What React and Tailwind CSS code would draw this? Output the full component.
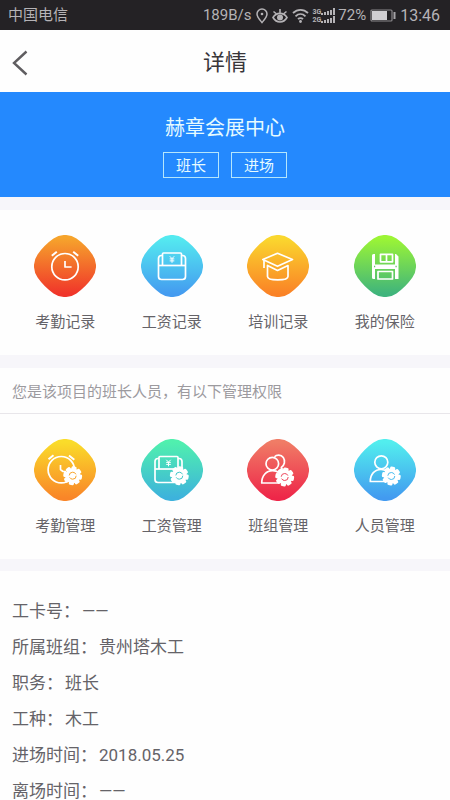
const records = [
  { label: '考勤记录', icon: ClockGlyph, from: '#f6a42c', to: '#f0352a' },
  { label: '工资记录', icon: WalletGlyph, from: '#54eaf0', to: '#449bf0' },
  { label: '培训记录', icon: CapGlyph, from: '#fad72e', to: '#fa8226' },
  { label: '我的保险', icon: FloppyGlyph, from: '#9cf535', to: '#3fb47c' },
]

const management = [
  { label: '考勤管理', icon: ClockGearGlyph, from: '#fadc2a', to: '#f98528' },
  { label: '工资管理', icon: WalletGearGlyph, from: '#50f0ae', to: '#3db2dc' },
  { label: '班组管理', icon: TeamGearGlyph, from: '#f07c66', to: '#ee2649' },
  { label: '人员管理', icon: PersonGearGlyph, from: '#52eeee', to: '#429af0' },
]

const details = [
  { label: '工卡号', value: '——' },
  { label: '所属班组', value: '贵州塔木工' },
  { label: '职务', value: '班长' },
  { label: '工种', value: '木工' },
  { label: '进场时间', value: '2018.05.25' },
  { label: '离场时间', value: '——' },
]

function ClockGlyph() {
  return (
    <g>
      <circle cx="31" cy="31.7" r="13.2" />
      <path d="M17.8 20.8 22.8 16.8M39.2 16.8l5 4" strokeWidth="2" />
      <path d="M31 26v6h6.6" />
    </g>
  )
}

function WalletGlyph() {
  return (
    <g>
      <path d="M21.5 20.5h-1a3 3 0 0 0-3 3v18a3 3 0 0 0 3 3h21a3 3 0 0 0 3-3v-18a3 3 0 0 0-3-3h-1" />
      <path d="M17.5 30.5h27" />
      <path d="M21.5 30.5V19a1 1 0 0 1 1-1h17a1 1 0 0 1 1 1v11.5" />
      <path d="m28.8 21.3 2.2 2.3 2.2-2.3M31 23.6v4.2M28.7 23.9h4.6M28.7 25.9h4.6" strokeWidth="1" />
    </g>
  )
}

function CapGlyph() {
  return (
    <g>
      <path d="M15.8 24.5 30.5 18.3l15 6.2-15 6.8z" />
      <path d="M17 25v8" />
      <path d="M20.5 30.5v11c0 4.500 20.500 4.500 20.500 0v-11l-10.500 5z" />
    </g>
  )
}

function FloppyGlyph() {
  return (
    <g>
      <path d="M18 20.500a1.500 1.500 0 0 1 1.500-1.500H21v10.500h20V19h1l2.500 2.500V44h-3.500V34H21v10h-1.500a1.500 1.500 0 0 1-1.500-1.500z" fill="white" stroke="none" />
      <rect x="26.500" y="19.300" width="12" height="7.500" />
      <path d="M32.500 19.500v7" />
      <rect x="24" y="36.500" width="14.500" height="7.500" />
      <path d="M20 31.500h1.200M41.500 31.500h1.200" stroke="#5fc866" />
    </g>
  )
}

function Gear({ x, y, color }) {
  return (
    <g transform={`translate(${x} ${y})`} stroke="none">
      <circle r="7.500" fill="white" />
      {[0, 45, 90, 135, 180, 225, 270, 315].map((angle) => (
        <rect key={angle} x="-2.600" y="-9.400" width="5.200" height="5" rx="1.500" fill="white" transform={`rotate(${angle + 10})`} />
      ))}
      <circle r="3.500" fill="none" stroke={color} strokeWidth="1" strokeDasharray="9 2" />
    </g>
  )
}

function ClockGearGlyph() {
  return (
    <g>
      <circle cx="27.300" cy="30.700" r="13.200" />
      <path d="m14.500 20.300 5-4M35 16.500l5.300 4.200" strokeWidth="2" />
      <path d="M26.500 26v4.500l2.500 2h3" />
      <Gear x={38.7} y={36.7} color="#f9a42a" />
    </g>
  )
}

function WalletGearGlyph() {
  return (
    <g>
      <path d="M18 19.500h-1a3 3 0 0 0-3 3v18a3 3 0 0 0 3 3h21a3 3 0 0 0 3-3v-18a3 3 0 0 0-3-3h-1" />
      <path d="M14 30h27" />
      <path d="M18 30V18.500a1 1 0 0 1 1-1h17a1 1 0 0 1 1 1V30" />
      <path d="m25.300 20.800 2.200 2.300 2.200-2.300M27.500 23v4.300M25.200 23.400h4.600M25.200 25.400h4.600" strokeWidth="1" />
      <Gear x={38.3} y={36.7} color="#45c8c8" />
    </g>
  )
}

function TeamGearGlyph() {
  return (
    <g>
      <circle cx="25.300" cy="24.700" r="6.300" />
      <path d="M27.500 17.800c2-2.200 6.500-2.600 8.800.7 2.200 3.300 1.500 7.800-2.500 10.500M34 29.500l3 1" />
      <path d="M32 44H14.700c0-7.500 4.800-12.300 10.800-12.300 3 0 4.500.5 6.500 2" />
      <Gear x={37.7} y={38} color="#ee465a" />
    </g>
  )
}

function PersonGearGlyph() {
  return (
    <g>
      <circle cx="27.300" cy="23.300" r="6.500" />
      <path d="M32 42.500H16.300c0-7.500 4.500-12 10.700-12 2.500 0 4 .5 6 2" />
      <Gear x={37.3} y={37} color="#47bcf0" />
    </g>
  )
}

function MenuGrid({ id, items }) {
  return (
    <nav className="grid grid-cols-4 bg-[#fefefe] px-3 pt-[25px] pb-[21px]">
      {items.map(({ label, icon: Icon, from, to }, i) => (
        <button key={label} type="button" className="flex flex-col items-center gap-[13px]">
          <svg width="62" height="62" viewBox="0 0 62 62" aria-hidden="true">
            <defs>
              <linearGradient id={`${id}-${i}`} x1="0" y1="0" x2="0" y2="1">
                <stop offset="0.05" stopColor={from} />
                <stop offset="0.95" stopColor={to} />
              </linearGradient>
            </defs>
            <path
              d="M19.5 3.6A20 20 0 0 1 42.5 3.6Q51.85 10.15 58.4 19.5A20 20 0 0 1 58.4 42.5Q51.85 51.85 42.5 58.4A20 20 0 0 1 19.5 58.4Q10.15 51.85 3.6 42.5A20 20 0 0 1 3.6 19.5Q10.15 10.15 19.5 3.6z"
              fill={`url(#${id}-${i})`}
            />
            <g fill="none" stroke="white" strokeWidth="1.7" strokeLinejoin="round">
              <Icon />
            </g>
          </svg>
          <span className="text-[15px] leading-6 text-[#656368]">{label}</span>
        </button>
      ))}
    </nav>
  )
}

function StatusBar() {
  return (
    <div className="flex h-[30px] items-center justify-between bg-[#242225] pt-px pr-[10px] pl-2 text-[#b5b3b6]">
      <span className="text-[15px]">中国电信</span>
      <div className="flex items-center gap-1">
        <span className="text-[15px]">189B/s</span>
        <svg width="12" height="16" viewBox="0 0 12 16" fill="none" stroke="currentColor" strokeWidth="1.5">
          <path d="M6 14.500C3.500 11.500 1 9 1 6a5 5 0 0 1 10 0c0 3-2.500 5.500-5 8.500z" />
          <circle cx="6" cy="6" r="1.300" fill="currentColor" stroke="none" />
        </svg>
        <svg width="16" height="16" viewBox="0 0 16 16" fill="none" stroke="currentColor" strokeWidth="1.6">
          <path d="M1 9.500c3.500-5.500 10.500-5.500 14 0-3.500 6-10.500 6-14 0zM1.500 3.500l2.500 2M8 1v3.500M14.500 3.500l-2.500 2" />
          <circle cx="8" cy="9.500" r="3" fill="currentColor" stroke="none" />
        </svg>
        <svg width="17" height="15" viewBox="0 0 17 15" fill="none" stroke="currentColor" strokeWidth="1.8">
          <path d="M1 5c4.500-4.300 10.500-4.300 15 0M3.500 8.300c3-2.900 7-2.900 10 0M6 11.200c1.500-1.500 3.500-1.500 5 0" />
          <circle cx="8.500" cy="13.500" r="1.400" fill="currentColor" stroke="none" />
        </svg>
        <div className="flex items-center">
          <div className="flex flex-col text-[7px] leading-2 font-bold">
            <span>3G</span>
            <span>2G</span>
          </div>
          <svg width="15" height="15" viewBox="0 0 15 15" fill="currentColor">
            <path d="M0 5h2v2H0zM3 4h2v3H3zM6 3h2v4H6zM9 2h2v5H9zM12 0h2v7h-2zM0 13h2v2H0zM3 12h2v3H3zM6 11h2v4H6zM9 10h2v5H9zM12 8h2v7h-2z" />
          </svg>
          <span className="ml-0.5 text-[15px]">72%</span>
        </div>
        <svg width="26" height="13" viewBox="0 0 26 13">
          <rect x="1" y="1" width="21" height="11" rx="1" fill="none" stroke="#8a888b" strokeWidth="1.2" />
          <rect x="2" y="2" width="15" height="9" fill="#d0ced1" />
          <path d="M24.500 3v7" stroke="#a5a3a6" strokeWidth="2" />
        </svg>
        <span className="text-base">13:46</span>
      </div>
    </div>
  )
}

export default function App() {
  return (
    <div className="min-h-screen bg-[#f7f6fa] font-['Roboto','Noto_Sans_CJK_SC',sans-serif]">
      <StatusBar />

      <header className="grid h-[62px] grid-cols-[1fr_auto_1fr] items-center bg-[#fefefe] pt-1">
        <button type="button" aria-label="返回" className="justify-self-start pl-3 text-[#5f5d60]">
          <svg width="16" height="26" viewBox="0 0 16 26" fill="none" stroke="currentColor" strokeWidth="2.4">
            <path d="M14.500 1.500 2 13l12.500 11.500" />
          </svg>
        </button>
        <h1 className="text-[22px] leading-8 text-[#38363a]">详情</h1>
      </header>

      <section className="flex flex-col items-center gap-[9px] bg-[#2489fe] pt-[21px] pb-[19px] text-[#e6fbff]">
        <h2 className="text-xl leading-[30px]">赫章会展中心</h2>
        <div className="flex gap-3">
          <span className="border border-[#b5e6fc] px-3 pt-0.5 text-[15px] leading-[22px]">班长</span>
          <span className="border border-[#b5e6fc] px-3 pt-0.5 text-[15px] leading-[22px]">进场</span>
        </div>
      </section>

      <div className="mt-[13px]">
        <MenuGrid id="records" items={records} />
      </div>

      <section className="mt-[13px]">
        <p className="border-b border-[#e8e6ea] bg-[#fefefe] px-3 pt-[3px] text-[15px] leading-[42px] text-[#9c9a9e]">
          您是该项目的班长人员，有以下管理权限
        </p>
        <MenuGrid id="management" items={management} />
      </section>

      <dl className="mt-3 bg-[#fefefe] px-3 pt-[22px] text-[17px] leading-9 text-[#656368]">
        {details.map(({ label, value }) => (
          <div key={label} className="flex gap-0.5">
            <dt>{label}：</dt>
            <dd>{value}</dd>
          </div>
        ))}
      </dl>
    </div>
  )
}
